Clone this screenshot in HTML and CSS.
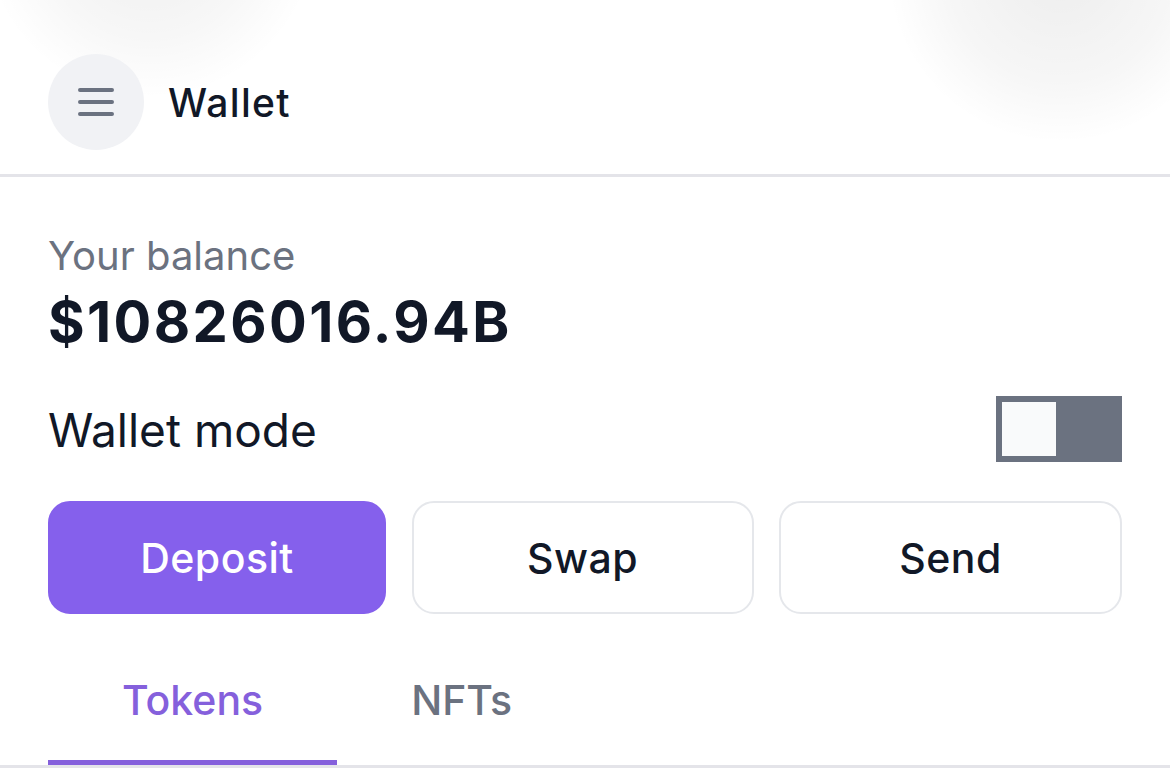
FILE: index.html
```html
<!DOCTYPE html>
<html lang="en">
<head>
<meta charset="utf-8">
<title>Wallet</title>
<link rel="stylesheet" href="styles.css">
</head>
<body>
<div class="page">
  <div class="blob blob-left"></div>
  <div class="blob blob-right"></div>
  <header class="topbar">
    <button class="menu-btn" aria-label="Menu">
      <svg width="36" height="28" viewBox="0 0 36 28">
        <path d="M2 2H34M2 14H34M2 26H34" stroke="#6b7280" stroke-width="4" stroke-linecap="round" fill="none"/>
      </svg>
    </button>
    <h1 class="title">Wallet</h1>
  </header>
  <main class="content">
    <div class="balance-label">Your balance</div>
    <div class="balance">$10826016.94B</div>
    <div class="mode-row">
      <span class="mode-label">Wallet mode</span>
      <div class="toggle"><div class="knob"></div></div>
    </div>
    <div class="actions">
      <button class="action primary">Deposit</button>
      <button class="action">Swap</button>
      <button class="action">Send</button>
    </div>
    <nav class="tabs">
      <div class="tab active">Tokens</div>
      <div class="tab">NFTs</div>
    </nav>
  </main>
</div>
</body>
</html>
```

FILE: styles.css
```css
* { box-sizing: border-box; }
html, body { margin: 0; padding: 0; background: #ffffff; }
body {
  font-family: Inter, "Noto Sans", "Liberation Sans", sans-serif;
  color: #111827;
  width: 1170px;
  height: 782px;
  overflow: hidden;
}
.page { position: relative; width: 1170px; height: 782px; overflow: hidden; }
.blob {
  position: absolute;
  border-radius: 50%;
  pointer-events: none;
  z-index: 0;
}
.blob-left {
  left: -20px; top: -240px; width: 340px; height: 340px;
  background: radial-gradient(circle, rgba(0,0,0,0.07) 0%, rgba(0,0,0,0.03) 45%, rgba(0,0,0,0) 70%);
}
.blob-right {
  left: 880px; top: -200px; width: 360px; height: 340px;
  background: radial-gradient(circle, rgba(0,0,0,0.07) 0%, rgba(0,0,0,0.035) 45%, rgba(0,0,0,0) 70%);
}
.topbar {
  position: relative;
  z-index: 1;
  display: flex;
  align-items: center;
  gap: 24px;
  padding: 54px 48px 24px;
  border-bottom: 3px solid #e4e4e9;
}
.menu-btn {
  width: 96px; height: 96px;
  border-radius: 50%;
  border: none;
  background: #f1f2f5;
  display: flex; align-items: center; justify-content: center;
  padding: 0;
}
.title {
  margin: 0;
  font-size: 39px;
  font-weight: 500;
  color: #111827;
  letter-spacing: 1.3px;
}
.content {
  position: relative;
  z-index: 1;
  padding: 55px 48px 0;
}
.balance-label {
  font-size: 40px;
  line-height: 48px;
  color: #6b7280;
  font-weight: 400;
}
.balance {
  margin-top: 10px;
  font-size: 56px;
  line-height: 64px;
  font-weight: 700;
  color: #111827;
  letter-spacing: 2.4px;
}
.mode-row {
  margin-top: 41px;
  display: flex;
  align-items: center;
  justify-content: space-between;
}
.mode-label {
  font-size: 46px;
  line-height: 66px;
  padding-top: 2px;
  color: #111827;
}
.toggle {
  width: 126px; height: 66px;
  background: #6b7280;
  padding: 6px;
  display: flex;
}
.knob {
  width: 54px; height: 54px;
  background: #f9fafb;
}
.actions {
  margin-top: 38px;
  display: grid;
  grid-template-columns: 338px 342px 343px;
  justify-content: space-between;
}
.action {
  height: 113px;
  border-radius: 22px;
  border: 2px solid #e5e7eb;
  background: #ffffff;
  font-family: inherit;
  font-size: 41px;
  letter-spacing: 0.5px;
  font-weight: 500;
  color: #111827;
  padding: 0;
}
.action.primary {
  background: #8560ec;
  border-color: #8560ec;
  color: #ffffff;
}
.tabs {
  margin: 31px -48px 0;
  padding: 0 48px;
  display: flex;
  border-bottom: 3px solid #e4e4e9;
}
.tab {
  padding: 30px 74px 35px;
  font-size: 41px;
  line-height: 50px;
  font-weight: 500;
  color: #6b7280;
  border-bottom: 5px solid transparent;
}
.tab.active {
  color: #8560dc;
  border-bottom-color: #8560dc;
}
```
